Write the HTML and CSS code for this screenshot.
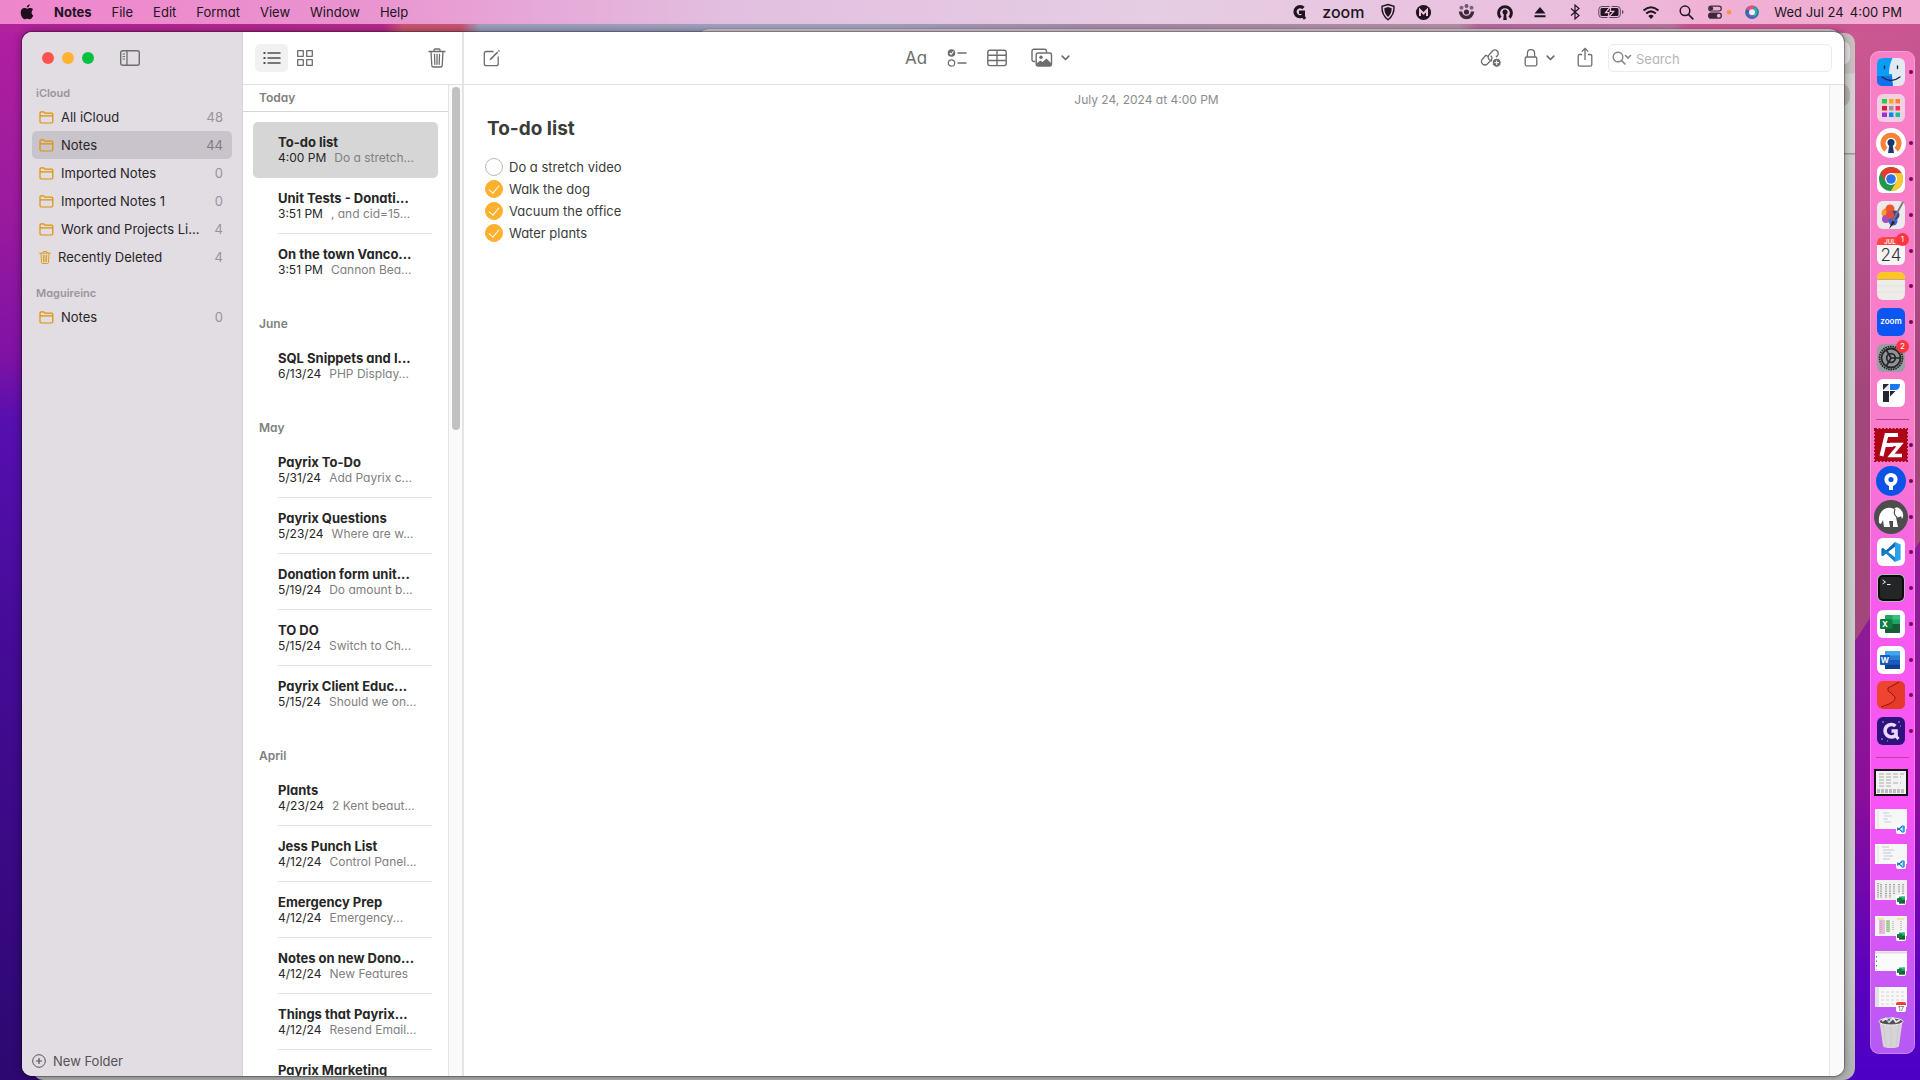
FILE: index.html
```html
<!DOCTYPE html>
<html lang="en">
<head>
    <meta charset="UTF-8">
    <meta name="viewport" content="width=device-width, initial-scale=1.0">
    <title>Notes</title>
    <link rel="stylesheet" href="styles.css">
</head>
<body>

<!-- shared icons -->
<svg class="defs" aria-hidden="true">
    <symbol id="folder" viewBox="0 0 15 13"><path d="M1 10.5V2Q1 .8 2.2.8H4.6L6 2.1H12.6Q13.8 2.1 13.8 3.3V10.8Q13.8 12 12.6 12H2.2Q1 12 1 10.8ZM1 4.8H13.8" fill="none" stroke="currentColor" stroke-width="1.200"/></symbol>
    <symbol id="trash" viewBox="0 0 18 20"><path d="M1 3.5H17M6 3.3V2Q6 1 7 1H11Q12 1 12 2V3.3M3 3.8L3.8 17.4Q3.9 19 5.4 19H12.6Q14.1 19 14.2 17.4L15 3.8M6.5 6.5L6.8 16.3M9 6.5V16.3M11.5 6.5L11.2 16.3" fill="none" stroke="currentColor" stroke-width="1.3" stroke-linecap="round"/></symbol>
    <symbol id="chevron" viewBox="0 0 9 6"><path d="M1.2 1.2L4.5 4.5L7.8 1.2" fill="none" stroke="currentColor" stroke-width="1.7" stroke-linecap="round" stroke-linejoin="round"/></symbol>
    <symbol id="vscode" viewBox="0 0 20 20"><path d="M14 0L5 8.4 1.8 6 .4 6.8V13.2L1.8 14 14 4.8Z" fill="#0f6cb4"/><path d="M14 20L5 11.6 1.8 14 .4 13.2 2.5 10 1.8 6 14 15.2Z" fill="#1180c8"/><path d="M14 0L19.6 2.4V17.6L14 20Z" fill="#2aa1ec"/></symbol>
    <symbol id="excel" viewBox="0 0 20 18"><rect x="5" width="15" height="18" rx="1" fill="#21a366"/><path d="M5 9H20V17Q20 18 19 18H6Q5 18 5 17Z" fill="#185c37"/><path d="M5 4.5H12.5V13.5H5Z" fill="#107c41"/><path d="M12.5 0H19Q20 0 20 1V4.5H12.5Z" fill="#33c481"/><rect y="4" width="10" height="10" rx="1" fill="#107c41"/></symbol>
</svg>

<header class="menubar">
    <nav class="menus">
        <button class="apple" aria-label="Apple menu"><svg width="14" height="16" viewBox="0 0 14 16"><path d="M9.7.2C9.8 1.9 8.3 3.7 6.8 3.6 6.6 2 8.1.4 9.7.2ZM11.6 8.4C11.6 6.9 12.5 6 13.1 5.5 12.3 4.4 11.2 4 10.2 4 8.9 4 8.1 4.7 7.3 4.7S5.4 4 4.4 4C2.200 4.100.7 5.800.7 8.600.7 11.900 2.900 15.300 4.500 15.300 5.400 15.300 6 14.700 7.200 14.700S8.900 15.300 9.800 15.300C11.200 15.300 12.700 13.200 13.300 11.400 12.200 10.900 11.600 9.800 11.600 8.400Z" fill="#1d0f1c"/></svg></button>
        <button class="app-name">Notes</button>
        <button>File</button>
        <button>Edit</button>
        <button>Format</button>
        <button>View</button>
        <button>Window</button>
        <button>Help</button>
    </nav>
    <div class="status">
        <svg width="14" height="18" viewBox="0 0 14 18"><path d="M11.500 5A5 5 0 1 0 11.300 12.500V9.200H7" fill="none" stroke="#201420" stroke-width="3.400"/><path d="M10.300 12L13 16" stroke="#201420" stroke-width="3"/></svg>
        <span class="zoom-word">zoom</span>
        <svg width="16" height="18" viewBox="0 0 16 18"><path d="M8 1.500L14 3.300Q14.500 12 8 16.800 1.500 12 2 3.300Z" fill="none" stroke="#201420" stroke-width="1.400"/><path d="M8 4L11.700 5.200Q11.700 10.600 8 14 4.300 10.600 4.300 5.200Z" fill="#201420"/></svg>
        <svg width="28" height="18" viewBox="0 0 28 18"><circle cx="14.500" cy="9.500" r="7.600" fill="#201420"/><path d="M11 13V7L14.500 10.500 18 7V13" fill="none" stroke="#efc0dc" stroke-width="2"/></svg>
        <svg width="32" height="18" viewBox="0 0 32 18"><path d="M10.500 8.500A6 6 0 0 0 22.500 8.500" fill="none" stroke="#3c2a3b" stroke-width="3.400"/><circle cx="16.500" cy="9" r="2.600" fill="#3c2a3b"/><circle cx="16.500" cy="2.900" r="2" fill="#6d546b"/><circle cx="11.500" cy="4.700" r="2" fill="#7d617a"/><circle cx="21.500" cy="4.700" r="2" fill="#7d617a"/></svg>
        <svg width="20" height="18" viewBox="0 0 20 18"><path d="M5.500 14.600A6.400 6.400 0 1 1 14.500 14.600" fill="none" stroke="#201420" stroke-width="3"/><circle cx="10" cy="9" r="2.500" fill="#201420"/><path d="M9 10H11L11.800 17H8.200Z" fill="#201420"/></svg>
        <svg width="22" height="18" viewBox="0 0 22 18"><path d="M12 4L17.500 10.500H6.500ZM6.500 12.300H17.500V14.300H6.500Z" fill="#201420"/></svg>
        <svg width="22" height="18" viewBox="0 0 22 18"><path d="M8 5.500L16 12.500 12 16V2L16 5.500 8 12.500" fill="none" stroke="#201420" stroke-width="1.200"/></svg>
        <svg width="26" height="18" viewBox="0 0 26 18"><rect x=".8" y="3.500" width="21.500" height="11" rx="3" fill="none" stroke="#5c465a"/><rect x="2.500" y="5" width="18" height="8" rx="1.500" fill="#201420"/><path d="M24 7V11Q25.500 10.400 25.500 9T24 7Z" fill="#5c465a"/><path d="M13 3L7.500 9.700H11L10 15 15.800 8.300H12.200Z" fill="#201420" stroke="#efbcd9" stroke-width="1.200"/></svg>
        <svg width="28" height="18" viewBox="0 0 28 18"><path d="M6.500 7.600Q14 .8 21.500 7.600M9.200 10.600Q14 6.200 18.800 10.600" fill="none" stroke="#201420" stroke-width="2"/><path d="M11.300 13Q14 10.700 16.700 13L14 16Z" fill="#201420"/></svg>
        <svg width="16" height="18" viewBox="0 0 16 18"><circle cx="7" cy="7.800" r="4.800" fill="none" stroke="#201420" stroke-width="1.500"/><path d="M10.500 11.500L14.800 15.800" stroke="#201420" stroke-width="1.700" stroke-linecap="round"/></svg>
        <svg width="25" height="18" viewBox="0 0 25 18"><rect x="1.700" y="3.200" width="12.600" height="4.800" rx="2.400" fill="none" stroke="#3c2a3b" stroke-width="1.200"/><circle cx="4.200" cy="5.600" r="2" fill="#3c2a3b"/><rect x="1" y="9.600" width="14" height="6.200" rx="3.100" fill="#3c2a3b"/><circle cx="11.800" cy="12.700" r="1.900" fill="#efb3d4"/><circle cx="22" cy="9.200" r="2.300" fill="#ff9344"/></svg>
        <svg width="14" height="18" viewBox="0 0 14 18"><circle cx="7" cy="9.200" r="6.800" fill="#2c6f95"/><path d="M1 6Q5 1 10 3.500L7 9Z" fill="#e64b8c"/><path d="M10 3.500Q15 8 10 14.500L7 9Z" fill="#22b7a2"/><path d="M1 10Q4 17 10 14.500L7 9Z" fill="#5961c9"/><circle cx="7" cy="9.200" r="3" fill="#f2ecf6"/></svg>
        <time class="clock"><span>Wed Jul 24</span><span>4:00 PM</span></time>
    </div>
</header>

<main class="desktop">
    <div class="back-window back-browser"></div>
    <div class="back-window back-finder"><i class="tab"></i><i class="knob"></i></div>

    <section class="window">
        <aside class="sidebar">
            <div class="toolbar window-controls">
                <button class="light red" aria-label="Close"></button>
                <button class="light yellow" aria-label="Minimize"></button>
                <button class="light green" aria-label="Full screen"></button>
                <button class="tool sidebar-toggle" aria-label="Hide sidebar"><svg width="20" height="16" viewBox="0 0 20 16"><rect x=".7" y=".7" width="18.600" height="14.600" rx="2" fill="none" stroke="currentColor" stroke-width="1.400"/><path d="M7 1V15" stroke="currentColor" stroke-width="1.300"/><path d="M2.600 4H5M2.600 6.500H5M2.600 9H5" stroke="currentColor"/></svg></button>
            </div>
            <h2>iCloud</h2>
            <ul>
                <li><a href="#"><svg class="folder"><use href="#folder"/></svg><span>All iCloud</span><b>48</b></a></li>
                <li><a href="#" class="active"><svg class="folder"><use href="#folder"/></svg><span>Notes</span><b>44</b></a></li>
                <li><a href="#"><svg class="folder"><use href="#folder"/></svg><span>Imported Notes</span><b>0</b></a></li>
                <li><a href="#"><svg class="folder"><use href="#folder"/></svg><span>Imported Notes 1</span><b>0</b></a></li>
                <li><a href="#"><svg class="folder"><use href="#folder"/></svg><span>Work and Projects Li...</span><b>4</b></a></li>
                <li><a href="#"><svg class="bin"><use href="#trash"/></svg><span>Recently Deleted</span><b>4</b></a></li>
            </ul>
            <h2>Maguireinc</h2>
            <ul>
                <li><a href="#"><svg class="folder"><use href="#folder"/></svg><span>Notes</span><b>0</b></a></li>
            </ul>
            <button class="new-folder"><svg width="14" height="14" viewBox="0 0 14 14"><circle cx="7" cy="7" r="6.300" fill="none" stroke="currentColor"/><path d="M7 4V10M4 7H10" stroke="currentColor" stroke-width="1.200"/></svg>New Folder</button>
        </aside>

        <section class="list-pane">
            <div class="toolbar list-tools">
                <button class="tool view-btn selected" aria-label="List view"><svg width="18" height="14" viewBox="0 0 18 14"><path d="M5 2H17M5 7H17M5 12H17" stroke="#4f4f4f" stroke-width="1.500" stroke-linecap="round"/><path d="M.5 2H2.500M.5 7H2.500M.5 12H2.500" stroke="#4f4f4f" stroke-width="2"/></svg></button>
                <button class="tool view-btn" aria-label="Gallery view"><svg width="18" height="18" viewBox="0 0 18 18"><path d="M1.700 1.700H7.300V7.300H1.700ZM10.700 1.700H16.300V7.300H10.700ZM1.700 10.700H7.300V16.300H1.700ZM10.700 10.700H16.300V16.300H10.700Z" fill="none" stroke="currentColor" stroke-width="1.300" stroke-linejoin="round"/></svg></button>
                <button class="tool delete" aria-label="Delete"><svg width="18" height="20"><use href="#trash"/></svg></button>
            </div>
            <div class="list-body">
                <div class="notes">
                    <h3 class="pinned">Today</h3>
                    <ul>
                        <li class="selected"><a href="#"><strong>To-do list</strong><span>4:00 PM</span><em>Do a stretch...</em></a></li>
                        <li><a href="#"><strong>Unit Tests - Donati...</strong><span>3:51 PM</span><em>, and cid=15...</em></a></li>
                        <li><a href="#"><strong>On the town Vanco...</strong><span>3:51 PM</span><em>Cannon Bea...</em></a></li>
                    </ul>
                    <h3>June</h3>
                    <ul>
                        <li><a href="#"><strong>SQL Snippets and I...</strong><span>6/13/24</span><em>PHP Display...</em></a></li>
                    </ul>
                    <h3>May</h3>
                    <ul>
                        <li><a href="#"><strong>Payrix To-Do</strong><span>5/31/24</span><em>Add Payrix c...</em></a></li>
                        <li><a href="#"><strong>Payrix Questions</strong><span>5/23/24</span><em>Where are w...</em></a></li>
                        <li><a href="#"><strong>Donation form unit...</strong><span>5/19/24</span><em>Do amount b...</em></a></li>
                        <li><a href="#"><strong>TO DO</strong><span>5/15/24</span><em>Switch to Ch...</em></a></li>
                        <li><a href="#"><strong>Payrix Client Educ...</strong><span>5/15/24</span><em>Should we on...</em></a></li>
                    </ul>
                    <h3>April</h3>
                    <ul>
                        <li><a href="#"><strong>Plants</strong><span>4/23/24</span><em>2 Kent beaut...</em></a></li>
                        <li><a href="#"><strong>Jess Punch List</strong><span>4/12/24</span><em>Control Panel...</em></a></li>
                        <li><a href="#"><strong>Emergency Prep</strong><span>4/12/24</span><em>Emergency...</em></a></li>
                        <li><a href="#"><strong>Notes on new Dono...</strong><span>4/12/24</span><em>New Features</em></a></li>
                        <li><a href="#"><strong>Things that Payrix...</strong><span>4/12/24</span><em>Resend Email...</em></a></li>
                        <li><a href="#"><strong>Payrix Marketing</strong></a></li>
                    </ul>
                </div>
                <div class="track"><div class="thumb"></div></div>
            </div>
        </section>

        <section class="note-pane">
            <div class="toolbar note-tools">
                <button class="tool" aria-label="New note"><svg width="18" height="18" viewBox="0 0 18 18"><path d="M10.500 2.500H3.300Q1.300 2.500 1.300 4.500V14.700Q1.300 16.700 3.300 16.700H13.200Q15.200 16.700 15.200 14.700V7.500" fill="none" stroke="currentColor" stroke-width="1.300"/><path d="M6.500 11.500L7.400 9.300 14.200 2.500 15.300 3.600 8.500 10.500Z" fill="currentColor"/><path d="M15 1.800L15.900.9 17 2 16.100 2.900Z" fill="currentColor"/></svg></button>
                <div class="group format">
                    <button class="tool aa" aria-label="Format">Aa</button>
                    <button class="tool" aria-label="Checklist"><svg width="20" height="20" viewBox="0 0 20 20"><circle cx="4.500" cy="5" r="3.800" fill="currentColor"/><path d="M2.800 5L4.200 6.500 6.500 3.300" fill="none" stroke="#fff" stroke-width="1.100"/><circle cx="4.500" cy="15" r="3.200" fill="none" stroke="currentColor" stroke-width="1.200"/><path d="M10.500 5H19.500M10.500 15H19.500" stroke="currentColor" stroke-width="1.300"/></svg></button>
                    <button class="tool" aria-label="Table"><svg width="20" height="18" viewBox="0 0 20 18"><rect x=".8" y="1.200" width="18.400" height="15.400" rx="2" fill="none" stroke="currentColor" stroke-width="1.400"/><path d="M1 6.200H19M1 11.500H19M10 1V17" stroke="currentColor" stroke-width="1.400"/></svg></button>
                    <button class="tool pair" aria-label="Media"><svg width="22" height="20" viewBox="0 0 22 20"><path d="M4.500 13.500H3Q1 13.500 1 11.500V3.300Q1 1.300 3 1.300H13.500Q15.500 1.300 15.500 3.300V4.500" fill="none" stroke="currentColor" stroke-width="1.400"/><rect x="5.200" y="5" width="15.300" height="13" rx="2" fill="#fff" stroke="currentColor" stroke-width="1.400"/><circle cx="10" cy="9.300" r="1.700" fill="currentColor"/><path d="M5.500 15.500L9.300 12.500 11.500 14 15.500 10.500 20 15V17L18.500 18H7Z" fill="currentColor"/></svg><svg width="9" height="6"><use href="#chevron"/></svg></button>
                </div>
                <div class="group actions">
                    <button class="tool" aria-label="Add link"><svg width="22" height="20" viewBox="0 0 22 20"><g fill="none" stroke="currentColor" stroke-width="1.300"><path d="M8.500 8.500L5.800 7.300 2.300 11.200Q.4 13.700 2.600 16 5 18 7.300 16L11 12.300Q13 9.800 10.800 7.800"/><path d="M12.600 13.200L9.600 12Q7 10 9 7L12.500 3Q15 .8 17.300 3 19.300 5.200 17.300 7.800L16 9.300"/></g><circle cx="16.700" cy="14.700" r="4.500" fill="currentColor" stroke="#fff"/><path d="M16.700 12.500V17M14.400 14.700H19" stroke="#fff"/></svg></button>
                    <button class="tool pair" aria-label="Lock note"><svg width="14" height="20" viewBox="0 0 14 20"><rect x="1.200" y="9" width="11.600" height="8.800" rx="1.500" fill="none" stroke="currentColor" stroke-width="1.300"/><path d="M3.400 9V5.500Q3.400 1.700 7 1.700T10.600 5.500V9" fill="none" stroke="currentColor" stroke-width="1.300"/></svg><svg width="9" height="6"><use href="#chevron"/></svg></button>
                    <button class="tool" aria-label="Share"><svg width="16" height="21" viewBox="0 0 16 21"><path d="M5 7.500H2.700Q1.200 7.500 1.200 9V17.700Q1.200 19.200 2.700 19.200H13.300Q14.800 19.200 14.800 17.700V9Q14.800 7.500 13.300 7.500H11M8 13V1.500M4.800 4.600L8 1.400 11.200 4.600" fill="none" stroke="currentColor" stroke-width="1.300"/></svg></button>
                    <label class="search"><svg width="20" height="14" viewBox="0 0 20 14"><circle cx="6" cy="6" r="4.800" fill="none" stroke="currentColor" stroke-width="1.400"/><path d="M9.500 9.500L13 13M13.500 4.500L16 7 18.500 4.500" fill="none" stroke="currentColor" stroke-width="1.600" stroke-linecap="round"/></svg><input type="search" placeholder="Search" aria-label="Search"></label>
                </div>
            </div>
            <div class="note-body">
                <article class="note">
                    <time>July 24, 2024 at 4:00 PM</time>
                    <h1>To-do list</h1>
                    <ul>
                        <li><label><input type="checkbox">Do a stretch video</label></li>
                        <li><label><input type="checkbox" checked>Walk the dog</label></li>
                        <li><label><input type="checkbox" checked>Vacuum the office</label></li>
                        <li><label><input type="checkbox" checked>Water plants</label></li>
                    </ul>
                </article>
                <div class="note-track"></div>
            </div>
        </section>
    </section>

    <nav class="dock">
        <button class="running" aria-label="Finder"><svg class="app" viewBox="0 0 28 28"><rect width="28" height="28" rx="6" fill="#e3e9f1"/><path d="M6 0H15.500Q12 7 12 16H15Q15 23 16 28H6Q0 28 0 22V6Q0 0 6 0Z" fill="#0a9df8"/><path d="M0 18H15Q15 23 16 28H6Q0 28 0 22Z" fill="#1370ec"/><path d="M7.500 8V10.500M20.500 8V10.500M5 19Q14 26 23 19" fill="none" stroke="#17304f" stroke-width="1.400" stroke-linecap="round"/></svg></button>
        <button aria-label="Launchpad"><svg class="app" viewBox="0 0 28 28"><rect width="28" height="28" rx="6" fill="#f3cfe4"/><path d="M5 5H10V9.500H5Z" fill="#29d03c"/><path d="M12 5H16.500V9.500H12Z" fill="#f6a81f"/><path d="M18.500 5H23V9.500H18.500Z" fill="#f5881f"/><path d="M5 12H10V16.500H5Z" fill="#d71f2c"/><path d="M12 12H16.500V16.500H12Z" fill="#97969c"/><path d="M18.500 12H23V16.500H18.500Z" fill="#fc3257"/><path d="M5 18.500H10V23H5Z" fill="#9b33cf"/><path d="M12 18.500H16.500V23H12Z" fill="#0b84f5"/><path d="M18.500 18.500H23V23H18.500Z" fill="#14c19b"/></svg></button>
        <button class="running" aria-label="OpenVPN"><svg class="app round" viewBox="0 0 30 30"><circle cx="15" cy="15" r="15" fill="#fff"/><path d="M10 21.500A8 8 0 1 1 20 21.500" fill="none" stroke="#f58235" stroke-width="5"/><circle cx="15" cy="14.500" r="3.500" fill="#1b3668"/><path d="M13.500 16H16.500L18 25H12Z" fill="#1b3668"/></svg></button>
        <button class="running" aria-label="Chrome"><svg class="app" viewBox="0 0 28 28"><rect width="28" height="28" rx="6" fill="#fff"/><circle cx="14" cy="14" r="12" fill="#23984a"/><path d="M3.600 8A12 12 0 0 1 24.400 8H14L8.800 17Z" fill="#e33b2e"/><path d="M24.400 8A12 12 0 0 1 14 26L19.200 17 14 8Z" fill="#fcc934"/><circle cx="14" cy="14" r="6" fill="#fff"/><circle cx="14" cy="14" r="4.800" fill="#2b73e8"/></svg></button>
        <button class="running" aria-label="Pixelmator"><svg class="app" viewBox="0 0 28 28"><rect width="28" height="28" rx="6" fill="#eee9ea"/><circle cx="9" cy="12" r="4.500" fill="#ff9a2f"/><circle cx="13" cy="8" r="4.500" fill="#f0552b"/><circle cx="9" cy="18" r="4" fill="#a34fc0"/><circle cx="16" cy="20" r="4.500" fill="#3766d7"/><circle cx="18" cy="14" r="4.500" fill="#4a3f8b"/><circle cx="13" cy="14" r="4" fill="#de4b4a"/><path d="M26 1L15 21" stroke="#77777d" stroke-width="1.800"/><path d="M15.500 19.500L12 28 18 21.500Z" fill="#3c1a18"/></svg></button>
        <button class="running" aria-label="Calendar"><svg class="app" viewBox="0 0 28 28"><rect width="28" height="28" rx="6" fill="#f8f5f6"/><path d="M0 8V6Q0 0 6 0H22Q28 0 28 6V8Z" fill="#fb4642"/><text x="13" y="7" class="cal-month">JUL</text><text x="14" y="24" class="cal-day">24</text></svg><span class="badge">1</span></button>
        <button class="running" aria-label="Notes"><svg class="app" viewBox="0 0 28 28"><rect width="28" height="28" rx="6" fill="#eeece8"/><path d="M0 7V6Q0 0 6 0H22Q28 0 28 6V7Z" fill="#fcc425"/><path d="M0 7.500H28" stroke="#c8ae75"/><path d="M0 14H28M0 20H28" stroke="#e4e1dc"/></svg></button>
        <button class="running" aria-label="Zoom"><svg class="app" viewBox="0 0 28 28"><rect width="28" height="28" rx="6" fill="#0b55f2"/><text x="14" y="16" class="zoom-text">zoom</text></svg></button>
        <button aria-label="System Settings"><svg class="app" viewBox="0 0 28 28"><rect width="28" height="28" rx="6" fill="#9b9ea1"/><circle cx="14" cy="14" r="11.500" fill="none" stroke="#242628" stroke-width="1.800" stroke-dasharray="1.600 .8"/><circle cx="14" cy="14" r="9.500" fill="#909396" stroke="#242628" stroke-width="1.800"/><circle cx="14" cy="14" r="4.300" fill="none" stroke="#242628" stroke-width="1.700"/><path d="M14 14H23.500M14 14L9.300 5.800M14 14L9.300 22.200" stroke="#242628" stroke-width="1.700"/></svg><span class="badge">2</span></button>
        <button aria-label="Prompt"><svg class="app" viewBox="0 0 28 28"><rect width="28" height="28" rx="6" fill="#fff"/><path d="M6 5H12V11H6Z" fill="#24272f"/><path d="M6 11L12 5V11Z" fill="#e8e8ec"/><path d="M13 5H23Q23 11 18 11H13Z" fill="#1b76f2"/><path d="M6 12H12V23H6ZM13 12H18.500L13 17.500Z" fill="#24272f"/></svg></button>
        <hr>
        <button class="running" aria-label="FileZilla"><svg class="app big" viewBox="0 0 34 34"><rect x="1" y="1" width="32" height="32" fill="#ad0717" stroke="#ad0717" stroke-width="2" stroke-dasharray="2 1.500"/><path d="M7.500 28L12.500 7H24M10 17H19" fill="none" stroke="#fff" stroke-width="4"/><path d="M16 16.500H26L17 27.500H28" fill="none" stroke="#fff" stroke-width="3.500"/></svg></button>
        <button class="running" aria-label="Sourcetree"><svg class="app round" viewBox="0 0 30 30"><circle cx="15" cy="15" r="15" fill="#0c52e6"/><circle cx="15" cy="13.500" r="4.600" fill="none" stroke="#fff" stroke-width="4"/><path d="M13 18H17V24H13Z" fill="#fff"/></svg></button>
        <button class="running" aria-label="MAMP"><svg class="app big" viewBox="0 0 34 34"><circle cx="17" cy="17" r="17" fill="#4d4d4d"/><path d="M5 23Q4 14 9 10Q14 6 20 9Q23 5 27 10Q31 14 28 19L27 16Q25 18 22 17L24 27H19V21H15L16 27H10L9 20 7 24Z" fill="#fff"/><path d="M21 9Q19 15 23 17" fill="none" stroke="#4d4d4d" stroke-width="1.200"/></svg></button>
        <button class="running" aria-label="Visual Studio Code"><svg class="app" viewBox="0 0 28 28"><rect width="28" height="28" rx="6" fill="#fff"/><use href="#vscode" x="4" y="4" width="20" height="20"/></svg></button>
        <button class="running" aria-label="Terminal"><svg class="app" viewBox="0 0 28 28"><rect width="28" height="28" rx="6" fill="#b9b9bb"/><rect x="1" y="1" width="26" height="26" rx="5" fill="#0c0c0c"/><rect x="3" y="3" width="22" height="22" rx="3" fill="#242526"/><path d="M5.500 6L8.500 8 5.500 10M10 10.500H13.500" fill="none" stroke="#eee"/></svg></button>
        <button class="running" aria-label="Excel"><svg class="app" viewBox="0 0 28 28"><rect width="28" height="28" rx="6" fill="#fff"/><use href="#excel" x="3" y="5" width="20" height="18"/><text x="8" y="17" class="office">X</text></svg></button>
        <button class="running" aria-label="Word"><svg class="app" viewBox="0 0 28 28"><rect width="28" height="28" rx="6" fill="#fff"/><rect x="8" y="5" width="15" height="18" rx="1" fill="#2b7cd3"/><path d="M8 5H23V9.500H8Z" fill="#41a5ee"/><path d="M8 14H23V18.500H8Z" fill="#185abd"/><path d="M8 18.500H23V23H8Z" fill="#103f91"/><rect x="3" y="9" width="10" height="10" rx="1" fill="#185abd"/><text x="8" y="17" class="office">W</text></svg></button>
        <button class="running" aria-label="Scrivener"><svg class="app" viewBox="0 0 28 28"><rect width="28" height="28" rx="6" fill="#ee4430"/><path d="M22 0L11 7Q10 10 14 12L18 16Q20 20 12 23L4 27Q6 28 8 28H22Q28 28 28 22V6Q28 1 22 0Z" fill="#e5392a"/><path d="M22 1L11 7Q9.500 10 14 12L18 16Q19 20 12 23L4 26" fill="none" stroke="#8f160f"/></svg></button>
        <button class="running" aria-label="Grammarly"><svg class="app" viewBox="0 0 28 28"><rect width="28" height="28" rx="6" fill="#2d117c"/><path d="M18.500 9A6.300 6.300 0 1 0 19 18V14H14.500" fill="none" stroke="#ead7fb" stroke-width="3.600"/><path d="M18 18L21.500 22" stroke="#ead7fb" stroke-width="3"/><path d="M5 5H7M21 5H23M4 22H6M23 9H24M10 24H11" stroke="#bda4ec"/></svg></button>
        <hr>
        <button aria-label="Minimized window"><svg class="shot" viewBox="0 0 34 28"><rect x="1" y="1" width="32" height="25" fill="#f3f3f3" stroke="#151515" stroke-width="2"/><path d="M5 5H30M5 8H27M5 11H19M5 14H27M5 17H18" stroke="#999" stroke-width=".8" stroke-dasharray="5 2"/><path d="M3 21H31M3 23H31" stroke="#888" stroke-dasharray="3 1"/></svg></button>
        <button aria-label="Minimized code window"><svg class="shot low" viewBox="0 0 34 28"><path d="M1 2H33V22H1Z" fill="#f7f7f8"/><path d="M4 4V21" stroke="#ddd"/><path d="M9 6H15M10 9H18M9 12H14M10 15H17" stroke="#b6c5d5" stroke-width=".8"/><rect x="22" y="17" width="10" height="10" rx="2" fill="#fff"/><use href="#vscode" x="23" y="18" width="8" height="8"/></svg></button>
        <button aria-label="Minimized code window"><svg class="shot low" viewBox="0 0 34 28"><path d="M1 2H33V22H1Z" fill="#f7f7f8"/><path d="M4 4V21" stroke="#ddd"/><path d="M8 5H15M9 8H20M9 11H17M10 14H19M9 17H16" stroke="#aebdd0" stroke-width=".8"/><rect x="22" y="17" width="10" height="10" rx="2" fill="#fff"/><use href="#vscode" x="23" y="18" width="8" height="8"/></svg></button>
        <button aria-label="Minimized spreadsheet"><svg class="shot low" viewBox="0 0 34 28"><path d="M1 2H33V22H1Z" fill="#f0f0f0"/><path d="M4 5V20M7 6V20M12 6V20M16 6V20M20 6V16M25 6V15M29 6V16" stroke="#a6a6a6" stroke-width="2" stroke-dasharray="1 .8"/><rect x="22" y="17" width="10" height="10" rx="2" fill="#fff"/><use href="#excel" x="23" y="18" width="8" height="8"/></svg></button>
        <button aria-label="Minimized spreadsheet"><svg class="shot low" viewBox="0 0 34 28"><path d="M1 2H33V22H1Z" fill="#f3f3f3"/><path d="M5 6H11V20H5Z" fill="#efb9df"/><path d="M12 6H16V18H12Z" fill="#a9dba1"/><path d="M4 5H10M23 5H30" stroke="#e5d94c"/><path d="M7 7V19M14 7V18M19 7V17M27 7V17" stroke="#999" stroke-dasharray="1 1"/><rect x="22" y="17" width="10" height="10" rx="2" fill="#fff"/><use href="#excel" x="23" y="18" width="8" height="8"/></svg></button>
        <button aria-label="Minimized spreadsheet"><svg class="shot low" viewBox="0 0 34 28"><path d="M1 2H33V22H1Z" fill="#fbfbfb"/><path d="M1 3.500H33" stroke="#ddd" stroke-width="2"/><path d="M2.500 7V21" stroke="#2d9960" stroke-dasharray="1.500 3"/><rect x="22" y="17" width="10" height="10" rx="2" fill="#fff"/><use href="#excel" x="23" y="18" width="8" height="8"/></svg></button>
        <button aria-label="Minimized calendar"><svg class="shot low" viewBox="0 0 34 28"><path d="M1 2H33V22H1Z" fill="#f8f8f8"/><path d="M1 2H5V22H1Z" fill="#e4e1e5"/><path d="M7 7H31M7 11H31M7 15H31M7 19H31" stroke="#c9c9c9" stroke-width=".8" stroke-dasharray="3 2"/><rect x="22" y="17" width="10" height="10" rx="2" fill="#fff"/><path d="M22 20V18.500Q22 17 24 17H30Q32 17 32 18.500V20Z" fill="#ef3c3a"/><text x="27" y="26" class="mini-day">17</text></svg></button>
        <button aria-label="Trash"><svg class="bin-icon" viewBox="0 0 26 32"><path d="M1.500 4L5 29Q6 31 13 31T21 29L24.500 4Z" fill="#d7d4d8"/><path d="M5 8L8 29M21 8L18 29M13 9V30" stroke="#cbc7cd" stroke-width=".8"/><ellipse cx="13" cy="4.500" rx="12" ry="3.500" fill="#554e55" stroke="#eeecef"/><path d="M4 4L8 1.500 11 5 15 1 18 5 22 3" fill="none" stroke="#e9e6e9" stroke-width="1.800"/><path d="M9 4L12 3" stroke="#2ba4b5" stroke-width="1.500"/></svg></button>
    </nav>
</main>
</body>
</html>
```

FILE: styles.css
```css
* {
    box-sizing: border-box;
}
body {
    margin: 0;
    height: 100vh;
    display: flex;
    flex-direction: column;
    overflow: hidden;
    font-family: Inter, "Liberation Sans", sans-serif;
    font-feature-settings: "cv11";
    font-size: 13px;
    line-height: 16px;
    color: #262626;
    background:
        linear-gradient(#b3209f, #9a1a9e 20%, #7f12a4 33%, #560fb0 39%, #450b96 60%, #2d0870) left / 50% 100% no-repeat,
        linear-gradient(to bottom right, transparent 50%, #8d1b96 51%) right 540px / 65px 100px no-repeat,
        linear-gradient(150deg, #d25a95, #a3467c 60%) right top / 90px 640px no-repeat,
        linear-gradient(#8d1b96, #8a0e9a 35%, #5c02bd 75%, #4c00c6) right bottom / 90px 440px no-repeat,
        #8a1b99;
}
ul {
    list-style: none;
    margin: 0;
    padding: 0;
}
h1, h2, h3 {
    margin: 0;
}
a {
    color: inherit;
    text-decoration: none;
}
button {
    border: 0;
    padding: 0;
    background: none;
    font: inherit;
    font-feature-settings: inherit;
    color: inherit;
}
svg {
    display: block;
    flex: none;
}
.defs {
    position: absolute;
    width: 0;
    height: 0;
}

/* menu bar */
.menubar {
    flex: none;
    height: 24px;
    display: flex;
    justify-content: space-between;
    align-items: center;
    padding: 0 18px 1px 20px;
    background: linear-gradient(90deg, #ef86cc, #ea92cf 18%, #e2bfe0 38%, #e5cde3 60%, #eac0df 80%, #f0b0d4 90%, #f1abd2);
    color: #201420;
}
.menus {
    display: flex;
    align-items: center;
    gap: 20px;
}
.app-name {
    font-weight: 700;
}
.status {
    display: flex;
    align-items: center;
    gap: 13px;
}
.zoom-word {
    width: 48px;
    text-align: center;
    font-size: 16px;
    font-weight: 500;
}
.clock {
    display: flex;
    gap: 6px;
    padding-left: 2px;
}

/* desktop and windows */
.desktop {
    position: relative;
    flex: 1;
    min-height: 0;
    padding: 8px 76px 4px 22px;
    background: linear-gradient(90deg, #b1229c, #b62a8b 20%, #cb566f 21%, #c75570 24%, #9ca0bf 25%, #a1a2be 45%, #a58ba8 57%, #b38fa3 76%, #b26a9c 77%, #b873a0 87%, #cb5592 88%) top / 100% 8px no-repeat;
}
.back-window {
    position: absolute;
    border-radius: 10px;
}
.back-browser {
    left: 698px;
    right: 80px;
    top: 5px;
    height: 40px;
    background: #d9c9d4;
    box-shadow: 0 0 1px #5a4455;
}
.back-finder {
    left: 32px;
    right: 65px;
    top: 9px;
    bottom: 0;
    overflow: hidden;
    border-radius: 10px 10px 12px 12px;
    background: linear-gradient(#c9bfc0 40px, #d2d2d2 41px 120px, #999 120px 121px, #cfcfcf 122px, #c6c6c6 90%, #b2b2b2);
}
.tab, .knob {
    position: absolute;
    right: 5px;
    top: 8px;
    width: 20px;
    height: 24px;
    border-radius: 8px;
    background: #e4e0e1;
}
.knob {
    top: 50px;
    background: #b9afb0;
    border-radius: 12px;
}
.window {
    position: relative;
    height: 100%;
    display: flex;
    overflow: hidden;
    border-radius: 10px;
    background: #fff;
    box-shadow: 0 0 0 1px rgba(0, 0, 0, .25), 0 0 8px rgba(0, 0, 0, .45);
}
.toolbar {
    flex: none;
    height: 53px;
    padding-bottom: 1px;
    display: flex;
    align-items: center;
    color: #6d6d6d;
}
.tool {
    display: flex;
    align-items: center;
    justify-content: center;
}

/* folders */
.sidebar {
    flex: none;
    width: 221px;
    display: flex;
    flex-direction: column;
    padding: 0 10px;
    background: #e2dce3;
    border-right: 1px solid #d8d2d9;
}
.window-controls {
    height: 52px;
    padding: 0 0 0 10px;
    gap: 8px;
}
.light {
    width: 12px;
    height: 12px;
    border-radius: 50%;
}
.red { background: #fe5150; }
.yellow { background: #fdb32d; }
.green { background: #06c140; }
.sidebar-toggle {
    margin-left: 18px;
}
.sidebar h2 {
    padding-left: 4px;
    font-size: 11px;
    line-height: 19px;
    font-weight: 600;
    color: #9a959c;
}
.sidebar ul {
    margin-bottom: 13px;
}
.sidebar a {
    display: flex;
    align-items: center;
    gap: 7px;
    height: 28px;
    padding: 0 9px 0 7px;
    border-radius: 5px;
}
.sidebar a.active {
    background: #c9c4cb;
}
.sidebar a span {
    flex: 1;
    white-space: nowrap;
}
.sidebar b {
    font-weight: 400;
    color: #98939a;
}
.active b {
    color: #817c83;
}
.folder {
    width: 15px;
    height: 13px;
    color: #de9200;
}
.bin {
    width: 12px;
    height: 15px;
    color: #de9200;
}
.new-folder {
    display: flex;
    align-items: center;
    gap: 7px;
    margin: auto auto 7px 0;
    color: #565257;
}

/* notes list */
.list-pane {
    flex: none;
    width: 221px;
    display: flex;
    flex-direction: column;
    border-right: 2px solid #e4e4e4;
}
.list-tools {
    padding: 0 16px 1px 12px;
    border-bottom: 1px solid #e0e0e0;
}
.view-btn {
    width: 33px;
    height: 28px;
    border-radius: 5px;
}
.view-btn.selected {
    background: #f1f1f1;
}
.list-tools .delete {
    margin-left: auto;
}
.list-body {
    flex: 1;
    min-height: 0;
    display: flex;
}
.notes {
    flex: 1;
    overflow: hidden;
}
.track {
    width: 14px;
    padding: 2px 0 0 3px;
    background: #fafafa;
    border-left: 1px solid #e4e4e4;
}
.thumb {
    width: 8px;
    height: 343px;
    border-radius: 4px;
    background: #c1c1c1;
}
.notes h3 {
    padding: 20px 16px 0;
    font-size: 12px;
    line-height: 28px;
    font-weight: 600;
    color: #7f7f7f;
}
.notes h3.pinned {
    padding-top: 0;
    line-height: 26px;
    margin-bottom: 10px;
    border-bottom: 1px solid #d6d6d6;
}
.notes li {
    margin: 0 10px;
    padding: 0 6px 0 25px;
    height: 56px;
    border-radius: 5px;
}
.notes li.selected {
    background: #d6d6d6;
}
.notes li a {
    display: flex;
    flex-wrap: wrap;
    align-content: flex-start;
    column-gap: 8px;
    height: 56px;
    padding-top: 12px;
    font-size: 12px;
    line-height: 15px;
    white-space: nowrap;
}
.notes li:not(.selected):not(:last-child) a {
    border-bottom: 1px solid #e2e2e2;
}
.notes strong {
    width: 100%;
    font-size: 13px;
    line-height: 16px;
}
.notes em {
    font-style: normal;
    color: #808080;
}

/* note */
.note-pane {
    flex: 1;
    min-width: 0;
    display: flex;
    flex-direction: column;
}
.note-tools {
    justify-content: space-between;
    padding: 0 12px 1px 19px;
    border-bottom: 1px solid #e0e0e0;
}
.group {
    display: flex;
    align-items: center;
}
.format {
    gap: 20px;
    margin-right: 6px;
}
.actions {
    gap: 22px;
}
.format .pair {
    margin-left: 4px;
}
.pair {
    gap: 8px;
}
.aa {
    font-size: 17px;
}
.search {
    display: flex;
    align-items: center;
    gap: 2px;
    width: 224px;
    height: 28px;
    margin-left: -7px;
    padding: 0 3px;
    border: 1px solid #ebebeb;
    border-radius: 6px;
    color: #858585;
}
.search input {
    flex: 1;
    min-width: 0;
    border: 0;
    padding: 2px 0 0 2px;
    outline: 0;
    background: none;
    font: inherit;
    font-feature-settings: inherit;
}
.search input::placeholder {
    color: #b5b5b5;
}
.note-body {
    flex: 1;
    display: flex;
}
.note {
    flex: 1;
    padding: 7px 21px;
    color: #3b3b3b;
}
.note time {
    display: block;
    text-align: center;
    font-size: 12px;
    color: #8c8c8c;
}
.note h1 {
    margin: 9px 0 15px 2px;
    font-size: 19px;
    line-height: 24px;
}
.note label {
    display: flex;
    align-items: center;
    gap: 6px;
    height: 22px;
}
.note input {
    appearance: none;
    display: grid;
    place-items: center;
    width: 18px;
    height: 18px;
    margin: 0;
    border: 1px solid #b9b9b9;
    border-radius: 50%;
}
.note input:checked {
    border-color: #fdb02d;
    background: #fdb02d;
}
.note input:checked::after {
    content: "";
    width: 5px;
    height: 9px;
    margin-bottom: 2px;
    border: solid #fff;
    border-width: 0 1px 1px 0;
    transform: rotate(40deg);
}
.note-track {
    width: 15px;
    background: #fafafa;
    border-left: 1px solid #e6e6e6;
}

/* dock */
.dock {
    position: absolute;
    top: 27px;
    bottom: 26px;
    right: 5px;
    width: 45px;
    display: flex;
    flex-direction: column;
    padding: 3px 0;
    border-radius: 9px;
    background: linear-gradient(#f97fc7, #f87dca 38%, #f65bee 55%, #f954f5 75%, #b45af4);
    box-shadow: inset 0 0 0 1px rgba(255, 255, 255, .25);
}
.dock button {
    position: relative;
    flex: 1;
    min-height: 0;
    padding-right: 3px;
    display: flex;
    align-items: center;
    justify-content: center;
}
.running::after {
    content: "";
    position: absolute;
    right: 2px;
    width: 4px;
    height: 4px;
    border-radius: 50%;
    background: #6f0a52;
}
.dock hr {
    flex: none;
    width: 33px;
    height: 1px;
    margin: 8px 6px 7px;
    border: 0;
    background: #b8439a;
}
.app {
    width: 28px;
    height: 28px;
}
.app.round {
    width: 30px;
    height: 30px;
}
.app.big {
    width: 34px;
    height: 34px;
}
.shot {
    width: 34px;
    height: 28px;
}
.shot.low {
    margin-top: 4px;
}
.bin-icon {
    width: 26px;
    height: 32px;
}
.badge {
    position: absolute;
    top: 0;
    right: 6px;
    width: 13px;
    height: 13px;
    border-radius: 50%;
    background: #fb3640;
    color: #fff;
    font-size: 8px;
    line-height: 13px;
    text-align: center;
}
.dock text {
    text-anchor: middle;
    fill: #fff;
}
.dock .cal-month {
    font-size: 6px;
    font-weight: 600;
}
.dock .cal-day {
    font-size: 17px;
    font-weight: 300;
    fill: #333;
}
.zoom-text {
    font-size: 8px;
    font-weight: 600;
}
.office {
    font-size: 8px;
    font-weight: 700;
}
.dock .mini-day {
    font-size: 6px;
    fill: #333;
}
```
